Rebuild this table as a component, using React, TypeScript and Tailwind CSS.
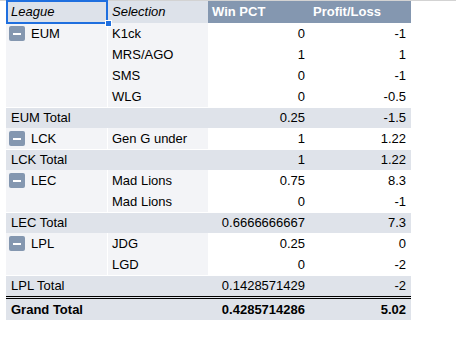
import { Fragment } from 'react'

interface Pick {
  selection: string
  pct: string
  pl: string
}

interface Group {
  league: string
  picks: Pick[]
  pct: string
  pl: string
}

const GROUPS: Group[] = [
  {
    league: 'EUM',
    picks: [
      { selection: 'K1ck', pct: '0', pl: '-1' },
      { selection: 'MRS/AGO', pct: '1', pl: '1' },
      { selection: 'SMS', pct: '0', pl: '-1' },
      { selection: 'WLG', pct: '0', pl: '-0.5' },
    ],
    pct: '0.25',
    pl: '-1.5',
  },
  {
    league: 'LCK',
    picks: [{ selection: 'Gen G under', pct: '1', pl: '1.22' }],
    pct: '1',
    pl: '1.22',
  },
  {
    league: 'LEC',
    picks: [
      { selection: 'Mad Lions', pct: '0.75', pl: '8.3' },
      { selection: 'Mad Lions', pct: '0', pl: '-1' },
    ],
    pct: '0.6666666667',
    pl: '7.3',
  },
  {
    league: 'LPL',
    picks: [
      { selection: 'JDG', pct: '0.25', pl: '0' },
      { selection: 'LGD', pct: '0', pl: '-2' },
    ],
    pct: '0.1428571429',
    pl: '-2',
  },
]

function Collapse() {
  return (
    <span className="flex h-[15px] w-[16px] shrink-0 items-center justify-center rounded-[2px] bg-[#8497b0]">
      <span className="h-[2px] w-[8px] bg-white" />
    </span>
  )
}

export default function App() {
  return (
    <div className="min-h-[340px] w-full border-t border-[#d3d3d3] bg-white font-['Liberation_Sans',Arial,sans-serif] text-[13px] text-black">
      <div className="relative ml-[6px] w-[405px]">
        {/* header */}
        <div className="flex h-[22px] leading-[22px]">
          <div className="w-[101px] bg-[#dde2ea] pl-[5px] italic">League</div>
          <div className="w-[1px] bg-white" />
          <div className="w-[100px] bg-[#dde2ea] pl-[4px] italic">Selection</div>
          <div className="flex flex-1 bg-[#8497b0] font-bold text-white">
            <span className="w-[102px] pl-[4px]">Win PCT</span>
            <span className="pl-[3px]">Profit/Loss</span>
          </div>
        </div>
        {/* selected cell */}
        <div className="absolute left-0 top-[-1px] h-[24px] w-[102px] border-2 border-[#1f6fdf]" />
        <div className="absolute left-[99px] top-[19px] h-[7px] w-[7px] border border-white bg-[#1f6fdf]" />

        {GROUPS.map((g) => (
          <Fragment key={g.league}>
            <div className="flex">
              <div className="flex w-[101px] items-start gap-[6px] bg-[#f3f4f7] pl-[3px] pt-[3px]">
                <Collapse />
                <span className="leading-[15px]">{g.league}</span>
              </div>
              <div className="w-[1px] bg-white" />
              <div className="flex flex-1 flex-col">
                {g.picks.map((p, i) => (
                  <div key={i} className="flex h-[21px] items-center">
                    <span className="w-[100px] self-stretch bg-[#f3f4f7] pl-[4px] leading-[21px]">{p.selection}</span>
                    <span className="w-[102px] pr-[5px] text-right">{p.pct}</span>
                    <span className="w-[101px] pr-[5px] text-right">{p.pl}</span>
                  </div>
                ))}
              </div>
            </div>
            <div className="flex h-[21px] border-t border-white bg-[#dfe3ea] leading-[20px]">
              <span className="w-[202px] pl-[5px]">{g.league} Total</span>
              <span className="w-[102px] pr-[5px] text-right">{g.pct}</span>
              <span className="w-[101px] pr-[5px] text-right">{g.pl}</span>
            </div>
          </Fragment>
        ))}

        <div className="flex h-[24px] border-t-[3px] border-double border-black bg-[#dfe3ea] font-bold leading-[21px]">
          <span className="w-[202px] pl-[5px]">Grand Total</span>
          <span className="w-[102px] pr-[5px] text-right">0.4285714286</span>
          <span className="w-[101px] pr-[5px] text-right">5.02</span>
        </div>
      </div>
    </div>
  )
}
